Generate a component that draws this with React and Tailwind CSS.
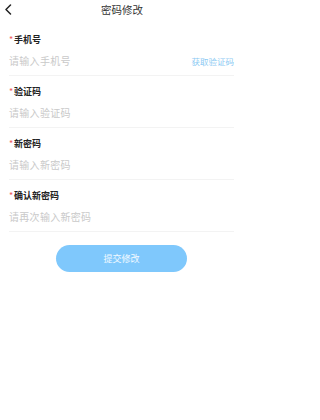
import React from "react";

const fields = [
  { label: "手机号", placeholder: "请输入手机号", code: true },
  { label: "验证码", placeholder: "请输入验证码" },
  { label: "新密码", placeholder: "请输入新密码" },
  { label: "确认新密码", placeholder: "请再次输入新密码" },
];

const font = { fontFamily: '"Noto Sans CJK SC", "Noto Sans", sans-serif' };

export default function App() {
  return (
    <div className="w-[236px] h-[420px] bg-white overflow-hidden font-['Noto_Sans_CJK_SC',sans-serif]">
      {/* header */}
      <div className="relative h-[20px] flex items-center justify-center pl-[8px]">
        <svg className="absolute left-[4px] top-[4px]" width="9" height="11" viewBox="0 0 9 11">
          <path d="M6.5 1 L2 5.5 L6.5 10" fill="none" stroke="#222" strokeWidth="1.5" strokeLinecap="round" strokeLinejoin="round" />
        </svg>
        <span className="text-[10.5px] leading-none text-[#333]">密码修改</span>
      </div>

      <div className="pt-[4px] pl-[9px] pr-[2px]">
        {fields.map((f) => (
          <div key={f.label} className="pt-[9px] pb-[3px] border-b border-[#f3f3f3]">
            <div className="flex items-center h-[12px]">
              <span className="text-[#ee5a5a] text-[9px] leading-none w-[4px] mr-[1px]">*</span>
              <span className="text-[9px] leading-none font-bold text-[#222]">{f.label}</span>
            </div>
            <div className="mt-[5px] h-[22px] flex items-center justify-between">
              <span className="text-[10px] leading-none text-[#c9c9c9] tracking-[0.3px]">{f.placeholder}</span>
              {f.code && <span className="text-[8.5px] leading-none text-[#8ccaf3]">获取验证码</span>}
            </div>
          </div>
        ))}
      </div>

      <div className="mt-[13px] flex justify-center pl-[7px]">
        <button className="w-[131px] h-[27px] rounded-full bg-[#7fc8fc] text-white/90 text-[9px]">提交修改</button>
      </div>
    </div>
  );
}
